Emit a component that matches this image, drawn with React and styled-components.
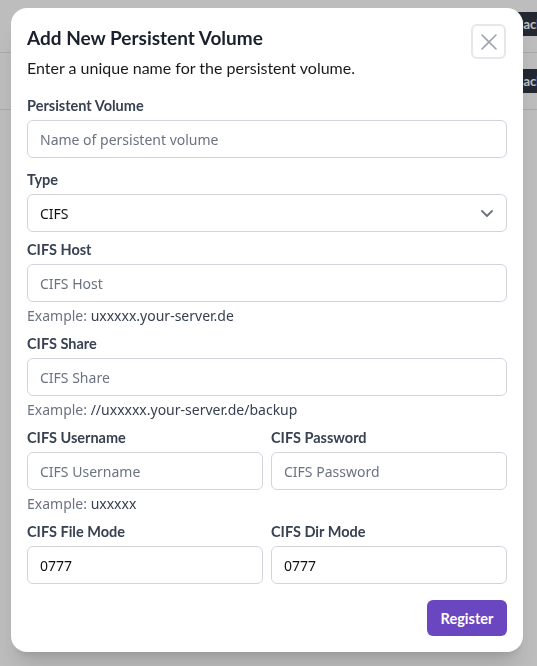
import React from "react";
import styled, { createGlobalStyle } from "styled-components";

const GlobalStyle = createGlobalStyle`
  * { box-sizing: border-box; }
  html, body { margin: 0; padding: 0; background: #ffffff; }
  body { font-family: "Noto Sans", "Open Sans", sans-serif; overflow: hidden; }
`;

const rows = ["Backup", "Backup"];

export default function App() {
  return (
    <>
      <GlobalStyle />
      <Page>
        {rows.map((badge, i) => (
          <Row key={i}>
            <Badge>{badge}</Badge>
          </Row>
        ))}
      </Page>
      <Overlay>
        <Modal>
          <Header>
            <div>
              <Title>Add New Persistent Volume</Title>
              <Subtitle>Enter a unique name for the persistent volume.</Subtitle>
            </div>
            <CloseBtn aria-label="Close">
              <svg width="16" height="16" viewBox="0 0 16 16">
                <path
                  d="M1 1L15 15M15 1L1 15"
                  stroke="#9ca3af"
                  strokeWidth="1.6"
                  strokeLinecap="round"
                />
              </svg>
            </CloseBtn>
          </Header>
          <Form>
            <Field $extra>
              <Label htmlFor="pv">Persistent Volume</Label>
              <Input id="pv" placeholder="Name of persistent volume" />
            </Field>
            <Field>
              <Label htmlFor="type">Type</Label>
              <SelectWrap>
                <Select id="type" defaultValue="cifs">
                  <option value="cifs">CIFS</option>
                  <option value="nfs">NFS</option>
                </Select>
                <Chevron width="12" height="7" viewBox="0 0 12 7">
                  <path
                    d="M1 1L6 6L11 1"
                    fill="none"
                    stroke="#6b7280"
                    strokeWidth="1.8"
                    strokeLinecap="round"
                    strokeLinejoin="round"
                  />
                </Chevron>
              </SelectWrap>
            </Field>
            <Field>
              <Label htmlFor="host">CIFS Host</Label>
              <Input id="host" placeholder="CIFS Host" />
              <Hint>
                Example: <strong>uxxxxx.your-server.de</strong>
              </Hint>
            </Field>
            <Field>
              <Label htmlFor="share">CIFS Share</Label>
              <Input id="share" placeholder="CIFS Share" />
              <Hint>
                Example: <strong>//uxxxxx.your-server.de/backup</strong>
              </Hint>
            </Field>
            <Pair>
              <Field>
                <Label htmlFor="user">CIFS Username</Label>
                <Input id="user" placeholder="CIFS Username" />
                <Hint>
                  Example: <strong>uxxxxx</strong>
                </Hint>
              </Field>
              <Field>
                <Label htmlFor="pass">CIFS Password</Label>
                <Input id="pass" type="password" placeholder="CIFS Password" />
              </Field>
            </Pair>
            <Pair>
              <Field>
                <Label htmlFor="fmode">CIFS File Mode</Label>
                <Input id="fmode" defaultValue="0777" />
              </Field>
              <Field>
                <Label htmlFor="dmode">CIFS Dir Mode</Label>
                <Input id="dmode" defaultValue="0777" />
              </Field>
            </Pair>
          </Form>
          <Footer>
            <SubmitBtn>Register</SubmitBtn>
          </Footer>
        </Modal>
      </Overlay>
    </>
  );
}

const Page = styled.div`
  margin-top: -4px;
`;

const Row = styled.div`
  height: 57px;
  border-bottom: 1px solid #e2e4e8;
  display: flex;
  align-items: center;
  justify-content: flex-end;
  overflow: hidden;
`;

const Badge = styled.span`
  background: #2f3542;
  color: #ffffff;
  font-family: "Lato", sans-serif;
  font-weight: 700;
  font-size: 13px;
  line-height: 24px;
  padding: 0 8px;
  margin-right: -29px;
  border-radius: 3px;
  white-space: nowrap;
`;

const Overlay = styled.div`
  position: fixed;
  inset: 0;
  background: rgba(0, 0, 0, 0.26);
  padding: 8px 11px;
`;

const Modal = styled.div`
  width: 512px;
  background: #ffffff;
  border-radius: 16px;
  padding: 16px;
  box-shadow: 0 20px 25px -5px rgba(0, 0, 0, 0.12),
    0 8px 10px -6px rgba(0, 0, 0, 0.12);
`;

const Header = styled.div`
  display: flex;
  justify-content: space-between;
  align-items: flex-start;
  margin-bottom: 14px;
`;

const Title = styled.h2`
  margin: 0;
  font-family: "Lato", sans-serif;
  font-weight: 700;
  font-size: 19px;
  line-height: 27px;
  color: #1a202c;
`;

const Subtitle = styled.p`
  margin: 5px 0 0;
  font-family: "Lato", sans-serif;
  font-size: 16px;
  line-height: 24px;
  color: #1a1a1a;
`;

const CloseBtn = styled.button`
  width: 35px;
  height: 35px;
  margin-right: 1px;
  display: flex;
  align-items: center;
  justify-content: center;
  background: #ffffff;
  border: 2px solid #e5e7eb;
  border-radius: 6px;
  padding: 0;
  cursor: pointer;
`;

const Form = styled.div`
  display: flex;
  flex-direction: column;
  gap: 6px;
`;

const Field = styled.div`
  display: flex;
  flex-direction: column;
  min-width: 0;
  margin-bottom: ${(p) => (p.$extra ? "4px" : "0")};
`;

const Pair = styled.div`
  display: grid;
  grid-template-columns: 1fr 1fr;
  gap: 8px;
`;

const Label = styled.label`
  font-family: "Lato", sans-serif;
  font-weight: 700;
  font-size: 14.5px;
  line-height: 20px;
  color: #374151;
  padding-top: 2px;
  margin-bottom: 4px;
`;

const Input = styled.input`
  height: 38px;
  width: 100%;
  padding: 0 12px;
  border: 1px solid #d1d5db;
  border-radius: 6px;
  font-family: "Noto Sans", sans-serif;
  font-size: 14px;
  color: #111111;
  background: #ffffff;
  outline: none;

  &::placeholder {
    color: #6b7280;
  }
`;

const SelectWrap = styled.div`
  position: relative;
`;

const Select = styled.select`
  appearance: none;
  height: 38px;
  width: 100%;
  padding: 0 36px 0 12px;
  border: 1px solid #d1d5db;
  border-radius: 6px;
  font-family: "Noto Sans", sans-serif;
  font-size: 14px;
  color: #111111;
  background: #ffffff;
  outline: none;
`;

const Chevron = styled.svg`
  position: absolute;
  right: 14px;
  top: 16px;
  pointer-events: none;
`;

const Hint = styled.div`
  margin-top: 4px;
  font-size: 14px;
  line-height: 20px;
  color: #6b7280;

  strong {
    font-weight: 400;
    color: #374151;
  }
`;

const Footer = styled.div`
  display: flex;
  justify-content: flex-end;
  margin-top: 16px;
`;

const SubmitBtn = styled.button`
  width: 80px;
  height: 36px;
  border: none;
  border-radius: 6px;
  background: #6b46c1;
  color: #ffffff;
  font-family: "Lato", sans-serif;
  font-weight: 700;
  font-size: 14.5px;
  cursor: pointer;
`;
